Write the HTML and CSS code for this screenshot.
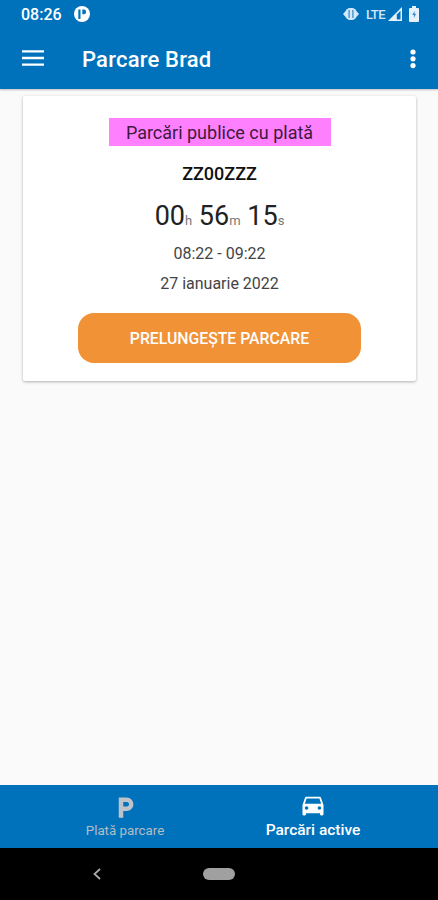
FILE: index.html
```html
<!DOCTYPE html>
<html lang="ro">
<head>
    <meta charset="UTF-8">
    <meta name="viewport" content="width=device-width, initial-scale=1.0">
    <title>Parcare Brad</title>
    <link rel="stylesheet" href="styles.css">
</head>
<body>
    <div id="app">
        <header>
            <div class="statusBar">
                <span class="clock">08:26</span>
                <svg class="appIcon" width="16" height="16" viewBox="0 0 16 16">
                    <circle cx="8" cy="8" r="8" fill="#fff"/>
                    <path d="M5.4 3.5v9.4" stroke="#0072bc" stroke-width="2.2"/>
                    <path d="M8.3 3.6h1.5a2.3 2.3 0 0 1 0 4.6H8.3z" fill="#0072bc"/>
                </svg>
                <div class="statusIcons">
                    <svg width="16" height="14" viewBox="0 0 16 14">
                        <path d="M0 7l4-4.5v9zM16 7l-4-4.5v9z" fill="#d3e8f8"/>
                        <rect x="2.6" y="1" width="10.8" height="12" rx="4.5" fill="#d3e8f8"/>
                        <path d="M6.1 3v8M9.9 3v8" stroke="#3a8fce" stroke-width="1.3"/>
                    </svg>
                    <span class="lte">LTE</span>
                    <svg class="signal" width="14" height="14" viewBox="0 0 14 14">
                        <path d="M14 0v14H0z" fill="#e6f2fb"/>
                        <path d="M12.5 3.8v8.7H8.8V7.6z" fill="#0072bc"/>
                    </svg>
                    <svg class="battery" width="10" height="16" viewBox="0 0 10 16">
                        <path d="M3 0h4v2h2a1 1 0 0 1 1 1v12a1 1 0 0 1-1 1H1a1 1 0 0 1-1-1V3a1 1 0 0 1 1-1h2z" fill="#e6f2fb"/>
                        <path d="M5.6 5L3.2 9h1.7v3l2.3-4.2H5.6z" fill="#3a8fce"/>
                    </svg>
                </div>
            </div>
            <div class="toolbar">
                <svg class="menuIcon" width="22" height="16" viewBox="0 0 22 16">
                    <path d="M0 1.3h22M0 8h22M0 14.7h22" stroke="#fff" stroke-width="2.3"/>
                </svg>
                <h1>Parcare Brad</h1>
                <svg class="moreIcon" width="6" height="20" viewBox="0 0 6 20" fill="#fff">
                    <circle cx="3" cy="3" r="2.6"/>
                    <circle cx="3" cy="9.8" r="2.6"/>
                    <circle cx="3" cy="16.6" r="2.6"/>
                </svg>
            </div>
        </header>

        <main>
            <div class="card">
                <div class="zone">Parcări publice cu plată</div>
                <div class="plate">ZZ00ZZZ</div>
                <div class="timer">00<small>h</small> 56<small>m</small> 15<small>s</small></div>
                <div class="interval">08:22 - 09:22</div>
                <div class="date">27 ianuarie 2022</div>
                <button class="extendButton">PRELUNGEȘTE PARCARE</button>
            </div>
        </main>

        <nav>
            <a class="tab">
                <svg width="27" height="27" viewBox="0 0 24 24" fill="#bdc3c9">
                    <path d="M13 3H6v18h4v-6h3c3.31 0 6-2.69 6-6s-2.69-6-6-6zm.2 8H10V7h3.2c1.1 0 2 .9 2 2s-.9 2-2 2z"/>
                </svg>
                <span>Plată parcare</span>
            </a>
            <a class="tab active">
                <svg width="28" height="28" viewBox="0 0 24 24" fill="#fff">
                    <path d="M18.92 6.01C18.72 5.42 18.16 5 17.5 5h-11c-.66 0-1.21.42-1.42 1.01L3 12v8c0 .55.45 1 1 1h1c.55 0 1-.45 1-1v-1h12v1c0 .55.45 1 1 1h1c.55 0 1-.45 1-1v-8l-2.08-5.99zM6.5 16c-.83 0-1.5-.67-1.5-1.5S5.67 13 6.5 13s1.5.67 1.5 1.5S7.33 16 6.5 16zm11 0c-.83 0-1.5-.67-1.5-1.5s.67-1.5 1.5-1.5 1.5.67 1.5 1.5-.67 1.5-1.5 1.5zM5 11l1.5-4.5h11L19 11H5z"/>
                </svg>
                <span>Parcări active</span>
            </a>
        </nav>

        <!-- Android system buttons -->
        <div class="systemBar">
            <svg class="backIcon" width="8" height="12" viewBox="0 0 8 12">
                <path d="M7 1L1.5 6L7 11" fill="none" stroke="#a8a8a8" stroke-width="1.8"/>
            </svg>
            <div class="homePill"></div>
        </div>
    </div>
</body>
</html>
```
FILE: styles.css
```css
body {
    font-family: Roboto, "Liberation Sans", sans-serif;
    margin: 0;
    padding: 0;
    background-color: #fafafa;
}
#app {
    display: flex;
    flex-direction: column;
    height: 900px;
}
header {
    height: 89px;
    background-color: #0072bc;
    color: white;
    box-shadow: 0 1px 2px rgba(0, 0, 0, 0.25);
}
.statusBar {
    display: flex;
    align-items: center;
    height: 28px;
    padding: 0 19px 0 21px;
}
.clock {
    font-size: 16px;
    font-weight: 500;
    width: 53px;
}
.statusIcons {
    display: flex;
    align-items: center;
    margin-left: auto;
}
.lte {
    font-size: 13px;
    font-weight: 500;
    letter-spacing: -0.6px;
    width: 20px;
    margin-left: 7px;
    color: #d3e8f8;
}
.signal {
    margin-left: 2px;
}
.battery {
    margin-left: 7px;
}
.toolbar {
    display: flex;
    align-items: center;
    height: 61px;
    padding: 0 22px;
}
.menuIcon {
    margin-bottom: 1px;
}
h1 {
    font-size: 22px;
    font-weight: 500;
    letter-spacing: 0.2px;
    margin: 2px 0 0 38px;
}
.moreIcon {
    margin-left: auto;
}
main {
    flex: 1;
}
.card {
    display: flex;
    flex-direction: column;
    align-items: center;
    box-sizing: border-box;
    height: 285px;
    margin: 7px 22px 0 23px;
    padding-top: 22px;
    background-color: white;
    border-radius: 2px;
    box-shadow: 0 1px 3px rgba(0, 0, 0, 0.3);
    color: #222;
}
.zone {
    width: 222px;
    height: 28px;
    line-height: 29px;
    font-size: 18px;
    text-align: center;
    background-color: #ff80ff; /* zone colour */
    color: #3c1a3c;
}
.plate {
    margin-top: 17px;
    font-size: 18px;
    line-height: 22px;
    font-weight: 500;
    color: #111;
}
.timer {
    margin-top: 14px;
    font-size: 27px;
    line-height: 34px;
}
.timer small {
    font-size: 13px;
    color: #777;
}
.interval {
    margin-top: 6px;
    font-size: 16px;
    line-height: 20px;
    color: #444;
}
.date {
    margin-top: 10px;
    font-size: 16px;
    line-height: 20px;
    color: #444;
}
.extendButton {
    flex: none;
    width: 283px;
    height: 50px;
    margin-top: 19px;
    padding: 0;
    border: none;
    border-radius: 16px;
    background-color: #f19237;
    color: white;
    font-family: inherit;
    font-size: 15.8px;
    font-weight: 500;
}
nav {
    display: flex;
    height: 63px;
    padding: 0 31px 0 31px;
    background-color: #0072bc;
}
.tab {
    display: flex;
    flex-direction: column;
    align-items: center;
    flex: 1;
    padding-top: 9px;
    font-size: 13.3px;
    color: #b4bcc4;
}
.tab span {
    line-height: 20px;
}
.tab.active {
    padding-top: 6px;
    font-size: 15.5px;
    font-weight: 500;
    color: white;
}
.tab.active span {
    margin-top: 1px;
}
.systemBar {
    display: flex;
    align-items: center;
    height: 52px;
    padding-left: 93px;
    background-color: black;
}
.homePill {
    width: 32px;
    height: 12px;
    margin-left: 102px;
    border-radius: 6px;
    background-color: #a0a0a0;
}
```
